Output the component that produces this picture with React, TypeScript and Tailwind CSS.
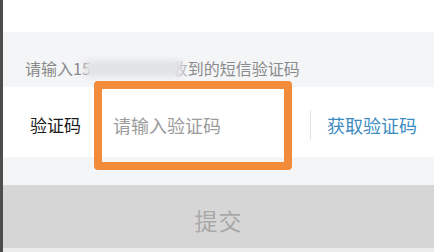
export default function App() {
  return (
    <div
      className="relative w-[434px] h-[252px] overflow-hidden bg-white border-l-[3px] border-[#4d4d4d] flex flex-col"
      style={{ fontFamily: '"Noto Sans CJK SC", "Noto Sans", sans-serif' }}
    >
      <div className="h-[32px] shrink-0 bg-white" />

      {/* hint */}
      <div className="h-[55px] shrink-0 bg-[#f4f5f7] pl-[22px] pt-[26px] text-[16px] leading-[21px] text-[#8a8a8a] flex items-start whitespace-nowrap">
        <span>请输入15</span>
        <span className="relative inline-block w-[12px]">
          <span className="absolute -left-[6px] top-[2px] w-[96px] h-[17px] bg-[#e2e3e6] blur-[3px]" />
        </span>
        <span className="w-[69px]" />
        <span>
          <span className="text-[#b4b5b8]">收</span>到的短信验证码
        </span>
      </div>

      {/* input row */}
      <div className="h-[70px] shrink-0 bg-white flex items-center pl-[27px] pt-[6px]">
        <span className="w-[83px] text-[17px] text-[#1c1c1c]">验证码</span>
        <span className="flex-1 text-[18px] text-[#9c9c9c]">请输入验证码</span>
        <span className="w-px h-[30px] bg-[#e3e3e3]" />
        <span className="ml-[16px] mr-[17px] text-[18px] text-[#3d8cc2]">获取验证码</span>
      </div>

      <div className="h-[28px] shrink-0 bg-[#f4f5f7]" />

      {/* submit */}
      <div className="h-[63px] shrink-0 bg-[#d6d6d6] flex items-center justify-center pt-[8px]">
        <span className="text-[23px] text-[#a8a8a8] tracking-[1px]">提交</span>
      </div>
      <div className="flex-1 bg-[#ececec]" />

      {/* highlight box */}
      <div className="absolute left-[91px] top-[81px] w-[198px] h-[89px] border-[8px] border-[#f28b3a] rounded-[4px]" />
    </div>
  );
}
